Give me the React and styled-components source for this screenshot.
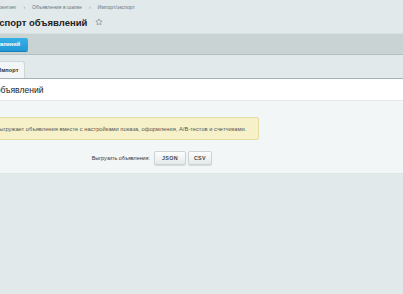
import React from "react";
import styled, { createGlobalStyle } from "styled-components";

const Global = createGlobalStyle`
  html, body { margin: 0; padding: 0; background: #e1e9eb; }
  body { font-family: "Liberation Sans", Arial, sans-serif; overflow: hidden; }
`;

const Page = styled.div`
  margin-left: -60px;
  width: 463px;
  min-height: 294px;
  background: #e1e9eb;
  display: flex;
  flex-direction: column;
`;

const Header = styled.div`
  padding-top: 2px;
  display: flex;
  flex-direction: column;
`;

const Crumbs = styled.div`
  display: flex;
  align-items: center;
  gap: 7px;
  height: 10px;
  font-size: 5.1px;
  color: #6a777d;
  padding-left: 4px;
`;

const Sep = styled.span`
  color: #8d999e;
  font-size: 5px;
`;

const TitleRow = styled.div`
  display: flex;
  align-items: center;
  gap: 8px;
  height: 20px;
  margin-bottom: 1px;
`;

const Title = styled.h1`
  margin: 0;
  font-size: 9.5px;
  font-weight: bold;
  color: #222;
  padding-left: 11px;
`;

const Toolbar = styled.div`
  height: 20px;
  background: #c9d3d4;
  border-top: 1px solid #d7dfe0;
  border-bottom: 1px solid #b3bfc0;
  display: flex;
  align-items: center;
  padding-left: 16px;
`;

const BlueButton = styled.div`
  height: 13px;
  display: flex;
  align-items: center;
  padding: 0 8px;
  background: linear-gradient(#37b0e6, #1f9ad7);
  border-radius: 2px;
  color: #fff;
  font-weight: bold;
  font-size: 5.6px;
  box-shadow: 0 1px 0 #1b7fb3;
`;

const Tabs = styled.div`
  display: flex;
  gap: 2px;
  padding: 6px 0 0 11px;
  height: 17px;
  align-items: flex-end;
`;

const Tab = styled.div`
  height: 16px;
  display: flex;
  align-items: center;
  padding: 0 6px;
  font-size: 5.7px;
  font-weight: bold;
  color: #333;
  background: ${p => (p.$active ? "#f3f6f7" : "#e9eff0")};
  border: 1px solid #cfd7d9;
  border-bottom: none;
  border-radius: 3px 3px 0 0;
`;

const Panel = styled.div`
  margin-left: 10px;
  border-top: 1px solid #a8b3b5;
  display: flex;
  flex-direction: column;
`;

const PanelHead = styled.div`
  height: 21px;
  background: #fff;
  border-bottom: 1px solid #e4e9ea;
  display: flex;
  align-items: center;
  padding-left: 11px;
  font-size: 8.6px;
  color: #222;
`;

const PanelBody = styled.div`
  background: #f3f6f7;
  border-bottom: 1px solid #dfe5e6;
  padding: 16px 0 8px 7px;
  display: flex;
  flex-direction: column;
  gap: 11px;
`;

const Notice = styled.div`
  align-self: flex-start;
  background: #f7f1c9;
  border: 1px solid #e5dca5;
  border-radius: 2px;
  height: 21px;
  display: flex;
  align-items: center;
  padding: 0 12px 0 15px;
  font-size: 5.75px;
  color: #555;
`;

const FormRow = styled.div`
  display: grid;
  grid-template-columns: 193px auto;
  align-items: center;
  column-gap: 4px;
`;

const Label = styled.div`
  text-align: right;
  font-size: 5.35px;
  color: #333;
`;

const Buttons = styled.div`
  display: flex;
  gap: 2px;
`;

const Btn = styled.div`
  height: 12px;
  padding: 0 ${p => p.$px}px;
  display: flex;
  align-items: center;
  background: linear-gradient(#fdfefe, #e3e9eb);
  border: 1px solid #cdd4d6;
  border-radius: 2px;
  box-shadow: 0 1px 1px rgba(0,0,0,0.12);
  font-size: 5.4px;
  font-weight: bold;
  color: #3f4a4f;
  letter-spacing: 0.3px;
`;

const Star = () => (
  <svg width="8" height="8" viewBox="0 0 24 24" fill="none" stroke="#7f8d93" strokeWidth="2" strokeLinejoin="round">
    <path d="M12 2.5l2.9 6.2 6.6.7-5 4.5 1.4 6.6L12 17.2l-5.9 3.3 1.4-6.6-5-4.5 6.6-.7z" />
  </svg>
);

export default function App() {
  return (
    <>
      <Global />
      <Page>
        <Header>
          <Crumbs>
            <span>Рабочий стол</span>
            <Sep>›</Sep>
            <span>Маркетинг</span>
            <Sep>›</Sep>
            <span>Объявления в шапке</span>
            <Sep>›</Sep>
            <span>Импорт/экспорт</span>
          </Crumbs>
          <TitleRow>
            <Title>Импорт/экспорт объявлений</Title>
            <Star />
          </TitleRow>
        </Header>
        <Toolbar>
          <BlueButton>Список объявлений</BlueButton>
        </Toolbar>
        <Tabs>
          <Tab>Экспорт</Tab>
          <Tab $active>Импорт</Tab>
        </Tabs>
        <Panel>
          <PanelHead>Экспорт объявлений</PanelHead>
          <PanelBody>
            <Notice>Экспорт выгружает объявления вместе с настройками показа, оформления, A/B-тестов и счетчиками.</Notice>
            <FormRow>
              <Label>Выгрузить объявления:</Label>
              <Buttons>
                <Btn $px={7}>JSON</Btn>
                <Btn $px={5}>CSV</Btn>
              </Buttons>
            </FormRow>
          </PanelBody>
        </Panel>
      </Page>
    </>
  );
}
